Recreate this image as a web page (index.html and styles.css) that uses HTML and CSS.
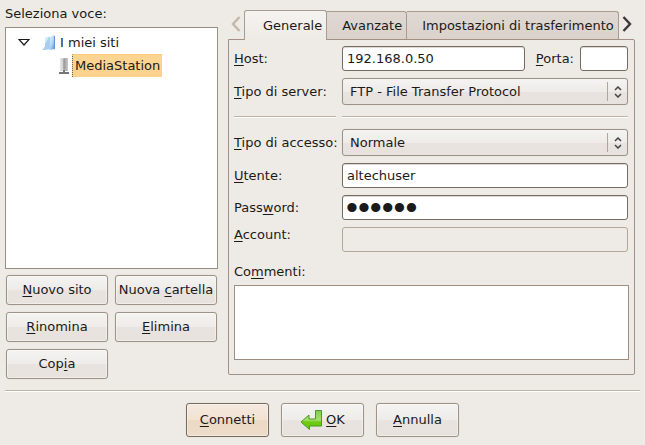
FILE: index.html
```html
<!DOCTYPE html>
<html lang="it">
<head>
    <meta charset="UTF-8">
    <meta name="viewport" content="width=device-width, initial-scale=1.0">
    <title>Gestore siti</title>
    <link rel="stylesheet" href="styles.css">
</head>
<body>
    <form id="siteForm">
        <div class="main">
            <div class="sites">
                <div class="sites-title" id="sitesTitle">Seleziona voce:</div>
                <div class="tree" role="tree" aria-labelledby="sitesTitle">
                    <div class="tree-row" role="treeitem" aria-expanded="true">
                        <svg class="expander" width="12" height="10" viewBox="0 0 12 10"><path d="M1 1.500h10L6 7z" fill="#fff" stroke="#1a1a1a" stroke-width="1.200"/></svg>
                        <svg width="16" height="16" viewBox="0 0 16 16">
                            <defs>
                                <linearGradient id="folder" x1="0" y1="0" x2="1" y2="1">
                                    <stop offset="0" stop-color="#eaf5ff"/>
                                    <stop offset="0.500" stop-color="#b5d7f7"/>
                                    <stop offset="1" stop-color="#4f8bd2"/>
                                </linearGradient>
                            </defs>
                            <path d="M0 15l4-5v5z" fill="#c5cdd6"/>
                            <path d="M3 3l4-2v12l-4 2z" fill="#d5e9fb"/>
                            <path d="M7 2l5-2 1 1v13l-6 1z" fill="url(#folder)"/>
                            <path d="M3 15V9l4-7 1 .5V14z" fill="#a6cff5"/>
                            <path d="M12.500 1v13" stroke="#5f97da"/>
                        </svg>
                        <span class="tree-label">I miei siti</span>
                    </div>
                    <div class="tree-row tree-child" role="treeitem" aria-selected="true">
                        <svg width="14" height="18" viewBox="0 0 14 18">
                            <defs>
                                <linearGradient id="server" x1="0" y1="0" x2="1" y2="0">
                                    <stop offset="0" stop-color="#e6e6e6"/>
                                    <stop offset="0.400" stop-color="#cfcfcf"/>
                                    <stop offset="0.600" stop-color="#a8a8a8"/>
                                    <stop offset="1" stop-color="#c8c8c8"/>
                                </linearGradient>
                            </defs>
                            <path d="M2 1h8v13H2z" fill="url(#server)"/>
                            <path d="M6 2v10" stroke="#8c8c8c"/>
                            <path d="M5 13h2v2h4v2H1v-2h4z" fill="#777"/>
                        </svg>
                        <span class="tree-label selected">MediaStation</span>
                    </div>
                </div>
                <div class="site-buttons">
                    <button type="button"><span><u>N</u>uovo sito</span></button>
                    <button type="button"><span>Nuova <u>c</u>artella</span></button>
                    <button type="button"><span><u>R</u>inomina</span></button>
                    <button type="button"><span><u>E</u>limina</span></button>
                    <button type="button"><span>Cop<u>i</u>a</span></button>
                </div>
            </div>

            <div class="settings">
                <div class="tabs" role="tablist">
                    <button type="button" class="scroll" aria-label="Indietro" disabled>
                        <svg width="10" height="16" viewBox="0 0 10 16"><path d="M8.500 1L2 8l6.500 7" fill="none" stroke="#c3b7aa" stroke-width="2.400"/></svg>
                    </button>
                    <button type="button" class="tab active" role="tab" aria-selected="true">Generale</button>
                    <button type="button" class="tab" role="tab">Avanzate</button>
                    <button type="button" class="tab" role="tab">Impostazioni di trasferimento</button>
                    <button type="button" class="scroll" aria-label="Avanti">
                        <svg width="10" height="16" viewBox="0 0 10 16"><path d="M1.500 1L8 8l-6.500 7" fill="none" stroke="#3a3a38" stroke-width="2.400"/></svg>
                    </button>
                </div>
                <div class="panel">
                    <div class="fields">
                        <label for="host"><u>H</u>ost:</label>
                        <div class="host-row">
                            <input type="text" id="host" name="host" value="192.168.0.50">
                            <label for="port"><u>P</u>orta:</label>
                            <input type="text" id="port" name="port">
                        </div>

                        <label for="protocol"><u>T</u>ipo di server:</label>
                        <div class="select">
                            <select id="protocol" name="protocol">
                                <option>FTP - File Transfer Protocol</option>
                            </select>
                            <svg class="arrows" width="8" height="12" viewBox="0 0 8 12"><path d="M1 4l3-3 3 3M1 8l3 3 3-3" fill="none" stroke="#444" stroke-width="1.500"/></svg>
                        </div>

                        <hr>
                        <hr>

                        <label for="logon"><u>T</u>ipo di accesso:</label>
                        <div class="select">
                            <select id="logon" name="logon">
                                <option>Normale</option>
                            </select>
                            <svg class="arrows" width="8" height="12" viewBox="0 0 8 12"><path d="M1 4l3-3 3 3M1 8l3 3 3-3" fill="none" stroke="#444" stroke-width="1.500"/></svg>
                        </div>

                        <label for="user"><u>U</u>tente:</label>
                        <input type="text" id="user" name="user" value="altechuser">

                        <label for="password">Pass<u>w</u>ord:</label>
                        <input type="password" id="password" name="password" value="secret">

                        <label for="account" class="top"><u>A</u>ccount:</label>
                        <input type="text" id="account" name="account" disabled>
                    </div>
                    <label for="comments" class="comments-label">Co<u>m</u>menti:</label>
                    <textarea id="comments" name="comments"></textarea>
                </div>
            </div>
        </div>

        <hr>
        <div class="actions">
            <button type="submit" class="default"><span><u>C</u>onnetti</span></button>
            <button type="button">
                <svg width="22" height="22" viewBox="0 0 22 22">
                    <defs>
                        <linearGradient id="enter" x1="0" y1="0" x2="0" y2="1">
                            <stop offset="0" stop-color="#7fce45"/>
                            <stop offset="0.500" stop-color="#a4e070"/>
                            <stop offset="0.600" stop-color="#6fcb14"/>
                            <stop offset="1" stop-color="#63c60a"/>
                        </linearGradient>
                    </defs>
                    <path d="M15.500 1.500h6V17H9.500v3.500L1 13 9 6v4h6.500z" fill="url(#enter)" stroke="#4a9a1c" stroke-linejoin="round"/>
                </svg>
                <span><u>O</u>K</span>
            </button>
            <button type="button"><span><u>A</u>nnulla</span></button>
        </div>
    </form>
</body>
</html>
```
FILE: styles.css
```css
* {
    box-sizing: border-box;
}
body {
    margin: 0;
    padding: 5px;
    background-color: #eeebe6;
    color: #1a1a1a;
    font: 13px/16px "DejaVu Sans", sans-serif;
}
svg {
    display: block;
    flex: none;
}
u {
    text-decoration-thickness: 1px;
    text-underline-offset: 2px;
}
button, input, select, textarea {
    margin: 0;
    font: inherit;
    color: inherit;
}
button {
    display: flex;
    align-items: center;
    justify-content: center;
    gap: 4px;
    height: 30px;
    padding: 0;
    border: 1px solid #9c9288;
    border-radius: 3px;
    background: linear-gradient(#f5f4f2, #eeebe8 50%, #e8e3de 52%, #e7e2dd);
    box-shadow: inset 0 0 0 1px rgba(255, 255, 255, 0.4), 0 0 1px #c9c2ba;
    white-space: nowrap;
}
hr {
    height: 2px;
    margin: 0;
    border: none;
    border-top: 1px solid #bfb3a5;
    background-color: #fff;
}
.main {
    display: flex;
    gap: 10px;
    padding: 1px 5px 11px 0;
}

/* site list */
.sites {
    flex: none;
    width: 213px;
}
.tree {
    height: 242px;
    margin-top: 5px;
    padding: 3px 10px;
    border: 1px solid #9c8f82;
    background-color: #fff;
}
.tree-row {
    display: flex;
    align-items: center;
    height: 23px;
}
.expander {
    margin: 0 12px 0 2px;
}
.tree-child {
    padding-left: 42px;
}
.tree-label {
    padding: 3px 2px;
}
.selected {
    border-left: 1px dotted #665;
    background: linear-gradient(#fdd592, #fcd28b);
    border-top: 1px solid #fcc977;
}
.site-buttons {
    display: grid;
    grid-template-columns: 1fr 1fr;
    gap: 7px;
    padding: 6px 1px 0;
}

/* tabs */
.settings {
    flex: 1;
    min-width: 0;
}
.tabs {
    display: flex;
    align-items: flex-end;
    height: 33px;
}
.scroll {
    flex: none;
    width: 16px;
    border: none;
    background: none;
    box-shadow: none;
}
.tab {
    height: 28px;
    padding: 0 4px 0 15px;
    border-color: #a89b8f;
    border-left: none;
    border-bottom: none;
    border-radius: 0 3px 0 0;
    background: linear-gradient(#dfd8d2, #dad2cb);
    box-shadow: none;
}
.tab.active {
    z-index: 1;
    height: 30px;
    margin-bottom: -1px;
    padding: 0 4px 0 18px;
    border-left: 1px solid #a89b8f;
    border-radius: 3px 3px 0 0;
    background: linear-gradient(#f5f3f0, #eeebe6);
}
.panel {
    padding: 6px 5px 14px;
    border: 1px solid #a29182;
    border-radius: 0 2px 2px 2px;
}

/* fields */
.fields {
    display: grid;
    grid-template-columns: 102px 1fr;
    align-items: center;
    gap: 7px 6px;
    padding-right: 1px;
}
.fields label {
    white-space: nowrap;
}
.fields hr {
    margin: 4px 0;
}
.fields .top {
    align-self: start;
}
input {
    width: 100%;
    height: 25px;
    padding: 0 4px;
    border: 1px solid #766b62;
    border-radius: 3px;
    background-color: #fff;
    box-shadow: inset 0 1px #ddd8d3;
}
input:disabled {
    border-color: #b5a698;
    background-color: #eeebe6;
    box-shadow: none;
}
/* large bullets */
#password {
    padding: 0 3px;
    font: 34px/23px "Liberation Sans", sans-serif;
}
.host-row {
    display: flex;
    align-items: center;
}
.host-row label {
    margin: 0 6px 0 11px;
}
#host {
    flex: 1;
    min-width: 0;
}
#port {
    flex: none;
    width: 48px;
}
.select {
    position: relative;
}
select {
    display: block;
    width: 100%;
    height: 27px;
    padding: 0 28px 0 7px;
    appearance: none;
    border: 1px solid #9c9288;
    border-radius: 3px;
    background: linear-gradient(#f5f4f2, #eeebe8 50%, #e8e3de 52%, #e7e2dd);
    box-shadow: 0 0 1px #c9c2ba;
}
.select::after {
    content: "";
    position: absolute;
    top: 4px;
    right: 20px;
    bottom: 4px;
    border-left: 1px solid #b0a69c;
}
.arrows {
    position: absolute;
    top: 8px;
    right: 6px;
    pointer-events: none;
}
.comments-label {
    display: block;
    margin: 12px 0 5px;
}
textarea {
    display: block;
    width: 100%;
    height: 75px;
    padding: 4px;
    border: 1px solid #9c8f82;
    background-color: #fff;
    resize: none;
}

/* dialog buttons */
.actions {
    display: flex;
    justify-content: center;
    gap: 12px;
    padding-top: 11px;
}
.actions button {
    width: 83px;
    height: 34px;
}
.actions .default {
    border-color: #776a5e;
    background: linear-gradient(#f5eadf, #f1e2d2 50%, #ebd9c4 52%, #ecdcc9);
}
```
